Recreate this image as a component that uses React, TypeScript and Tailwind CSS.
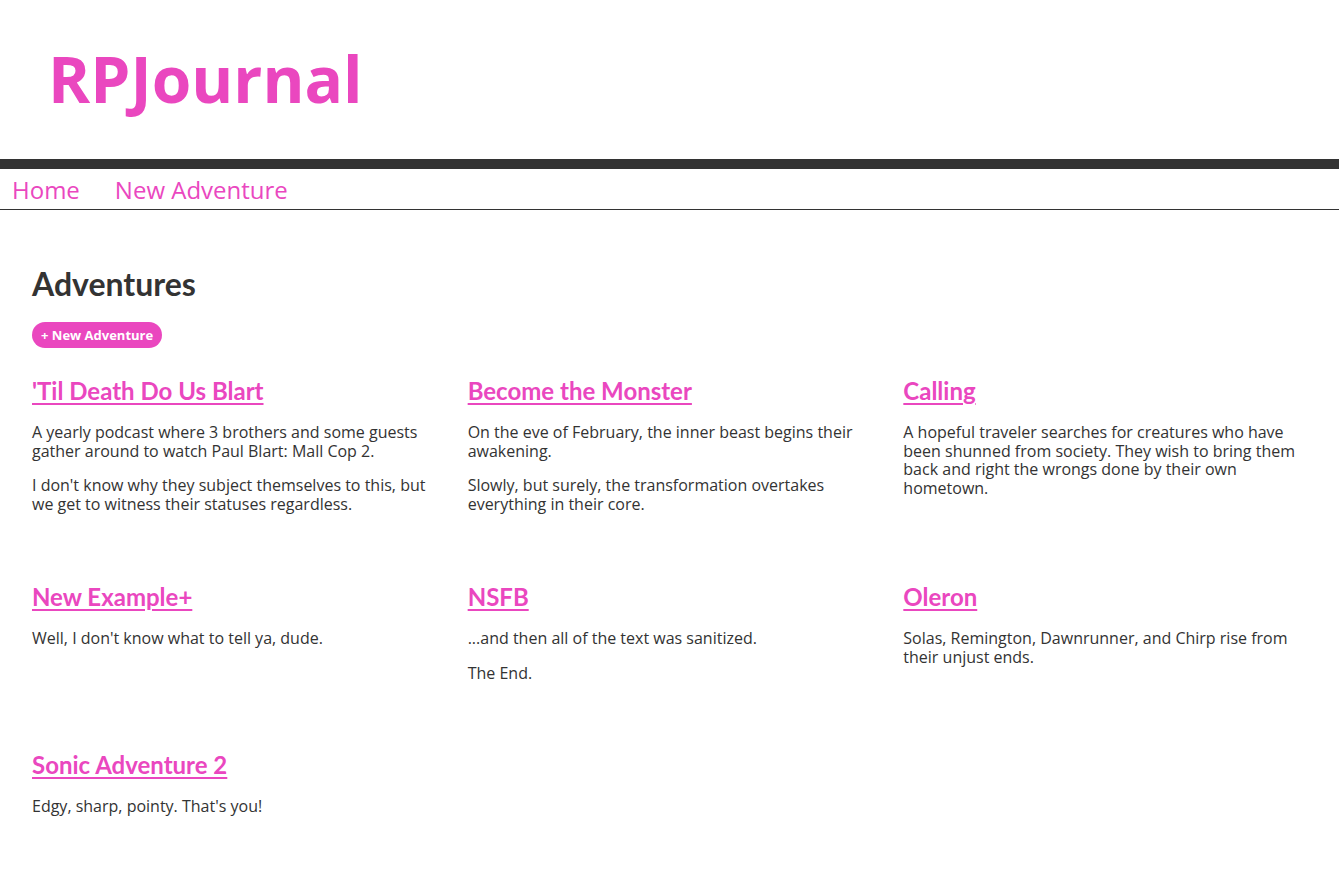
import React from 'react';

const adventures = [
  {
    title: "'Til Death Do Us Blart",
    paras: [
      'A yearly podcast where 3 brothers and some guests gather around to watch Paul Blart: Mall Cop 2.',
      "I don't know why they subject themselves to this, but we get to witness their statuses regardless.",
    ],
  },
  {
    title: 'Become the Monster',
    paras: [
      'On the eve of February, the inner beast begins their awakening.',
      'Slowly, but surely, the transformation overtakes everything in their core.',
    ],
  },
  {
    title: 'Calling',
    paras: [
      'A hopeful traveler searches for creatures who have been shunned from society. They wish to bring them back and right the wrongs done by their own hometown.',
    ],
  },
  { title: 'New Example+', paras: ["Well, I don't know what to tell ya, dude."] },
  { title: 'NSFB', paras: ['...and then all of the text was sanitized.', 'The End.'] },
  { title: 'Oleron', paras: ['Solas, Remington, Dawnrunner, and Chirp rise from their unjust ends.'] },
  { title: 'Sonic Adventure 2', paras: ["Edgy, sharp, pointy. That's you!"] },
];

export default function App() {
  return (
    <div className="min-h-screen bg-white text-[#333] font-['Open_Sans',sans-serif]">
      <header className="h-[159px] flex items-center pl-[48px] pb-[2px]">
        <h1 className="text-[64px] font-bold text-[#ea47bf] leading-none">RPJournal</h1>
      </header>
      <nav className="border-t-[10px] border-[#333] border-b border-b-[#333] h-[51px] flex items-center gap-[35px] pl-[12px] pt-[2px]">
        <a href="#" className="text-[24px] text-[#ea47bf] leading-none">Home</a>
        <a href="#" className="text-[24px] text-[#ea47bf] leading-none">New Adventure</a>
      </nav>

      <main className="pl-8 pt-[59px]">
        <h2 className="font-['Lato',sans-serif] font-bold text-[32px] leading-[30px]">Adventures</h2>
        <button className="mt-[23px] bg-[#ea47bf] text-white text-[13px] font-bold rounded-full h-[26px] px-[9px] leading-none">
          + New Adventure
        </button>

        <div className="grid grid-cols-3 gap-y-[68px] mt-[28px]">
          {adventures.map((a) => (
            <div key={a.title} className="pr-[36px]">
              <a href="#" className="font-['Lato',sans-serif] font-bold text-[24px] leading-[29px] text-[#ea47bf] underline underline-offset-[3px] decoration-[1.5px]">
                {a.title}
              </a>
              <div className="mt-[17px] flex flex-col gap-[16px]">
                {a.paras.map((p, i) => (
                  <p key={i} className="text-[16px] leading-[18.7px]">{p}</p>
                ))}
              </div>
            </div>
          ))}
        </div>
      </main>
    </div>
  );
}
